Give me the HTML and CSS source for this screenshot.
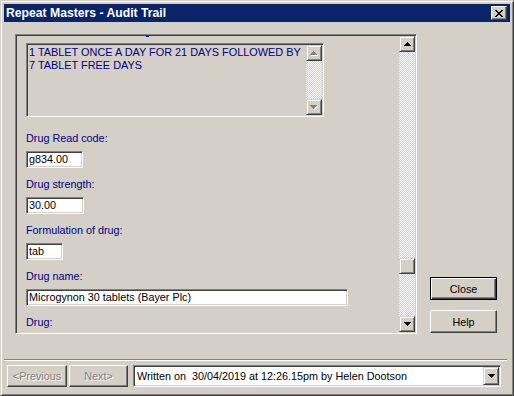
FILE: index.html
```html
<!DOCTYPE html>
<html lang="en">
<head>
  <meta charset="UTF-8" />
  <title>Repeat Masters - Audit Trail</title>
  <link rel="stylesheet" href="styles.css">
</head>
<body>
  <div class="window">
    <div class="titlebar">
      <span class="title">Repeat Masters - Audit Trail</span>
      <div class="tb-close">
        <svg width="8" height="7" viewBox="0 0 8 7" shape-rendering="crispEdges">
          <g fill="#000">
            <rect x="0" y="0" width="2" height="1"/><rect x="6" y="0" width="2" height="1"/>
            <rect x="1" y="1" width="2" height="1"/><rect x="5" y="1" width="2" height="1"/>
            <rect x="2" y="2" width="4" height="1"/>
            <rect x="3" y="3" width="2" height="1"/>
            <rect x="2" y="4" width="4" height="1"/>
            <rect x="1" y="5" width="2" height="1"/><rect x="5" y="5" width="2" height="1"/>
            <rect x="0" y="6" width="2" height="1"/><rect x="6" y="6" width="2" height="1"/>
          </g>
        </svg>
      </div>
    </div>

    <div class="main">
      <div class="pane">
        <div class="pane-content">
          <div class="cut-mark"></div>

          <div class="memo">
            <div class="memo-text">1 TABLET ONCE A DAY FOR 21 DAYS FOLLOWED BY<br>7 TABLET FREE DAYS</div>
            <div class="scrollbar">
              <div class="sb-btn">
                <svg width="8" height="5" viewBox="0 0 8 5" shape-rendering="crispEdges">
                  <g fill="#fff" transform="translate(1,1)"><rect x="3" y="0" width="1" height="1"/><rect x="2" y="1" width="3" height="1"/><rect x="1" y="2" width="5" height="1"/><rect x="0" y="3" width="7" height="1"/></g>
                  <g fill="#808080"><rect x="3" y="0" width="1" height="1"/><rect x="2" y="1" width="3" height="1"/><rect x="1" y="2" width="5" height="1"/><rect x="0" y="3" width="7" height="1"/></g>
                </svg>
              </div>
              <div class="sb-track"></div>
              <div class="sb-btn">
                <svg width="8" height="5" viewBox="0 0 8 5" shape-rendering="crispEdges">
                  <g fill="#fff" transform="translate(1,1)"><rect x="0" y="0" width="7" height="1"/><rect x="1" y="1" width="5" height="1"/><rect x="2" y="2" width="3" height="1"/><rect x="3" y="3" width="1" height="1"/></g>
                  <g fill="#808080"><rect x="0" y="0" width="7" height="1"/><rect x="1" y="1" width="5" height="1"/><rect x="2" y="2" width="3" height="1"/><rect x="3" y="3" width="1" height="1"/></g>
                </svg>
              </div>
            </div>
          </div>

          <div class="field">
            <div class="label">Drug Read code:</div>
            <div class="edit w57">g834.00</div>
          </div>
          <div class="field">
            <div class="label">Drug strength:</div>
            <div class="edit w58">30.00</div>
          </div>
          <div class="field">
            <div class="label">Formulation of drug:</div>
            <div class="edit w37">tab</div>
          </div>
          <div class="field">
            <div class="label">Drug name:</div>
            <div class="edit w322">Microgynon 30 tablets (Bayer Plc)</div>
          </div>
          <div class="field">
            <div class="label">Drug:</div>
          </div>
        </div>

        <div class="scrollbar">
          <div class="sb-btn">
            <svg width="7" height="4" viewBox="0 0 7 4" shape-rendering="crispEdges">
              <g fill="#000"><rect x="3" y="0" width="1" height="1"/><rect x="2" y="1" width="3" height="1"/><rect x="1" y="2" width="5" height="1"/><rect x="0" y="3" width="7" height="1"/></g>
            </svg>
          </div>
          <div class="sb-track upper"></div>
          <div class="sb-btn"></div>
          <div class="sb-track"></div>
          <div class="sb-btn">
            <svg width="7" height="4" viewBox="0 0 7 4" shape-rendering="crispEdges">
              <g fill="#000"><rect x="0" y="0" width="7" height="1"/><rect x="1" y="1" width="5" height="1"/><rect x="2" y="2" width="3" height="1"/><rect x="3" y="3" width="1" height="1"/></g>
            </svg>
          </div>
        </div>
      </div>

      <div class="side">
        <button class="btn default">Close</button>
        <button class="btn">Help</button>
      </div>
    </div>

    <div class="separator"></div>

    <div class="footer">
      <button class="btn disabled prev">&lt;Previous</button>
      <button class="btn disabled next">Next&gt;</button>
      <div class="combo">
        <span class="combo-text">Written on&nbsp; 30/04/2019 at 12:26.15pm by Helen Dootson</span>
        <div class="sb-btn combo-btn">
          <svg width="7" height="4" viewBox="0 0 7 4" shape-rendering="crispEdges">
            <g fill="#000"><rect x="0" y="0" width="7" height="1"/><rect x="1" y="1" width="5" height="1"/><rect x="2" y="2" width="3" height="1"/><rect x="3" y="3" width="1" height="1"/></g>
          </svg>
        </div>
      </div>
    </div>
  </div>
</body>
</html>
```

FILE: styles.css
```css
* {
  box-sizing: border-box;
}
body {
  margin: 0;
  font-family: 'Liberation Sans', Arial, sans-serif;
  font-size: 10.8px;
  background-color: #D4D0C8;
}
.window {
  width: 514px;
  height: 396px;
  display: flex;
  flex-direction: column;
  background-color: #D4D0C8;
  border: 1px solid;
  border-color: #D4D0C8 #404040 #404040 #D4D0C8;
  box-shadow: inset 1px 1px #fff, inset -1px -1px #808080;
  padding: 3px;
}
.titlebar {
  height: 18px;
  flex: none;
  display: flex;
  align-items: center;
  padding: 0 3px 0 2px;
  background-color: #0A246A;
}
.title {
  flex: 1;
  color: #fff;
  font-weight: bold;
  font-size: 12.2px;
}
.tb-close {
  width: 16px;
  height: 14px;
  display: flex;
  align-items: center;
  justify-content: center;
  background-color: #D4D0C8;
  border: 1px solid;
  border-color: #fff #404040 #404040 #fff;
  box-shadow: inset -1px -1px #808080;
}
.main {
  display: flex;
  margin-top: 12px;
  padding-left: 11px;
}
.pane {
  width: 402px;
  height: 300px;
  display: flex;
  border: 1px solid;
  border-color: #808080 #fff #fff #808080;
  box-shadow: inset 1px 1px #404040, inset -1px -1px #D4D0C8;
  padding: 1px;
}
.pane-content {
  flex: 1;
  overflow: hidden;
  padding-left: 9px;
}
.cut-mark {
  width: 3px;
  height: 1px;
  margin-left: 120px;
  background-color: #000080;
}
.memo {
  display: flex;
  width: 298px;
  height: 74px;
  margin: 6px 0 15px;
  border: 1px solid;
  border-color: #808080 #fff #fff #808080;
  box-shadow: inset 1px 1px #404040, inset -1px -1px #D4D0C8;
  padding: 1px;
}
.memo-text {
  flex: 1;
  padding: 1px 0 0 1px;
  font-size: 10.9px;
  line-height: 13px;
  color: #000080;
}
.scrollbar {
  width: 16px;
  flex: none;
  display: flex;
  flex-direction: column;
}
.sb-btn {
  width: 16px;
  height: 16px;
  flex: none;
  display: flex;
  align-items: center;
  justify-content: center;
  background-color: #D4D0C8;
  border: 1px solid;
  border-color: #D4D0C8 #404040 #404040 #D4D0C8;
  box-shadow: inset 1px 1px #fff, inset -1px -1px #808080;
}
.sb-track {
  flex: 1;
  background-color: #D4D0C8;
  background-image: repeating-conic-gradient(#fff 0 25%, #D4D0C8 0 50%);
  background-size: 2px 2px;
}
.sb-track.upper {
  flex: none;
  height: 206px;
}
.label {
  line-height: 13px;
  margin-bottom: 6px;
  color: #000080;
}
.field {
  margin-bottom: 10px;
}
.edit {
  height: 17px;
  background-color: #fff;
  border: 1px solid;
  border-color: #808080 #fff #fff #808080;
  box-shadow: inset 1px 1px #404040, inset -1px -1px #D4D0C8;
  padding: 0 2px;
  line-height: 14px;
  white-space: nowrap;
}
.w57 { width: 57px; }
.w58 { width: 58px; }
.w37 { width: 37px; }
.w322 { width: 322px; }
.side {
  width: 67px;
  margin-left: 13px;
  display: flex;
  flex-direction: column;
  justify-content: flex-end;
  gap: 10px;
  padding-bottom: 1px;
}
.btn {
  height: 23px;
  padding: 0;
  font-family: inherit;
  font-size: 10.8px;
  color: #000;
  background-color: #D4D0C8;
  border: 1px solid;
  border-color: #fff #404040 #404040 #fff;
  box-shadow: inset -1px -1px #808080;
}
.btn.default {
  border-color: #000;
  box-shadow: inset 1px 1px #fff, inset -1px -1px #404040, inset -2px -2px #808080;
}
.btn.disabled {
  height: 22px;
  color: #808080;
  text-shadow: 1px 1px #fff;
}
.separator {
  height: 2px;
  margin: 25px 3px 0 0;
  border-top: 1px solid #808080;
  border-bottom: 1px solid #fff;
}
.footer {
  display: flex;
  margin-top: 4px;
  padding-left: 3px;
}
.prev {
  width: 60px;
}
.next {
  width: 59px;
  margin-left: 2px;
}
.combo {
  width: 368px;
  height: 22px;
  margin-left: 5px;
  display: flex;
  align-items: center;
  background-color: #fff;
  border: 1px solid;
  border-color: #808080 #fff #fff #808080;
  box-shadow: inset 1px 1px #404040, inset -1px -1px #D4D0C8;
  padding: 1px;
}
.combo-text {
  flex: 1;
  padding-left: 2px;
  white-space: nowrap;
}
.combo-btn {
  height: 18px;
}
```
